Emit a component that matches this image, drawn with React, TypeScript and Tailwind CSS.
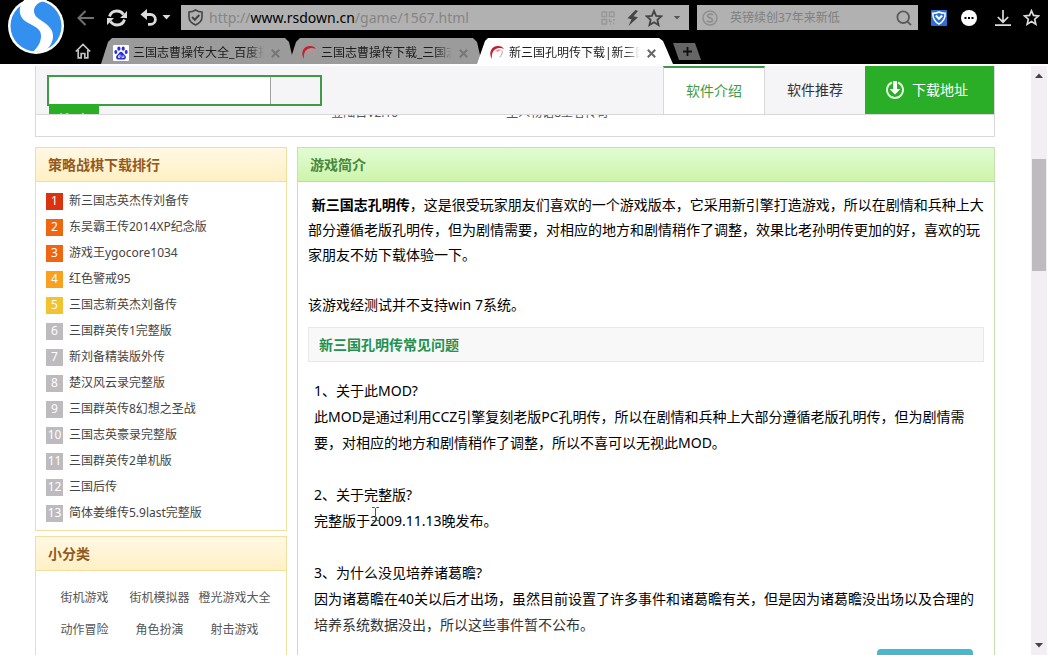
import React from 'react';
import { clsx } from 'clsx';

const tabs = [
  { title: '三国志曹操传大全_百度指', icon: 'baidu', active: false },
  { title: '三国志曹操传下载_三国志', icon: 'swirl', active: false },
  { title: '新三国孔明传下载|新三国', icon: 'swirl', active: true },
];

const ranking = [
  { name: '新三国志英杰传刘备传', color: 'bg-[#dc330f]' },
  { name: '东吴霸王传2014XP纪念版', color: 'bg-[#f0650f]' },
  { name: '游戏王ygocore1034', color: 'bg-[#f0650f]' },
  { name: '红色警戒95', color: 'bg-[#f9a01f]' },
  { name: '三国志新英杰刘备传', color: 'bg-[#f2c22f]' },
  { name: '三国群英传1完整版', color: 'bg-[#bdbbbe]' },
  { name: '新刘备精装版外传', color: 'bg-[#bdbbbe]' },
  { name: '楚汉风云录完整版', color: 'bg-[#bdbbbe]' },
  { name: '三国群英传8幻想之圣战', color: 'bg-[#bdbbbe]' },
  { name: '三国志英豪录完整版', color: 'bg-[#bdbbbe]' },
  { name: '三国群英传2单机版', color: 'bg-[#bdbbbe]' },
  { name: '三国后传', color: 'bg-[#bdbbbe]' },
  { name: '简体姜维传5.9last完整版', color: 'bg-[#bdbbbe]' },
];

const categories = ['街机游戏', '街机模拟器', '橙光游戏大全', '动作冒险', '角色扮演', '射击游戏'];

const STAR = 'M12 2.5l2.8 6.6 7.1.6-5.4 4.7 1.6 7L12 17.7l-6.1 3.7 1.6-7-5.4-4.7 7.1-.6z';

function Star({ className }: { className: string }) {
  return (
    <svg viewBox="0 0 24 24" className={className} fill="none" stroke="currentColor" strokeWidth="2.4">
      <path d={STAR} />
    </svg>
  );
}

function Caret({ className }: { className: string }) {
  return (
    <svg viewBox="0 0 8 5" className={className} fill="currentColor">
      <path d="M0 0h8L4 4.5z" />
    </svg>
  );
}

function Logo() {
  return (
    <svg viewBox="0 0 72 56" className="h-14 w-[72px] shrink-0">
      <circle cx="36" cy="26" r="28" fill="#fff" />
      <circle cx="36" cy="26" r="25.5" fill="#3390ee" />
      <path
        d="M26-2C21 3 19 8 20 13c1 6 6 9 12 12 6 3 9 6 9 11 0 6-3 11-8 16l12-1c5-4 8-9 8-15 0-7-5-11-11-15-5-3-8-6-8-10 0-5 4-9 11-10z"
        fill="#fff"
      />
    </svg>
  );
}

function TabIcon({ kind }: { kind: string }) {
  if (kind === 'baidu') {
    return (
      <svg viewBox="0 0 16 16" className="size-4 shrink-0">
        <rect width="16" height="16" rx="1" fill="#fff" />
        <g fill="#2a32d6">
          <ellipse cx="5.9" cy="3.7" rx="1.6" ry="2.1" />
          <ellipse cx="10.2" cy="3.7" rx="1.6" ry="2.1" />
          <ellipse cx="2.8" cy="7" rx="1.5" ry="1.9" />
          <ellipse cx="13.2" cy="7" rx="1.5" ry="1.9" />
          <path d="M8 6.8c-1.6 0-2 1.6-3.2 2.7-1.3 1.1-2 2-1.6 3.4.4 1.5 1.9 1.7 4.8 1.7s4.4-.2 4.8-1.7c.4-1.4-.3-2.3-1.6-3.4C10 8.400 9.600 6.800 8 6.800z" />
        </g>
        <path d="M7 9.500v3H5.500v-1.700H7M9 10.500v2h1.800v-2" fill="none" stroke="#fff" strokeWidth=".8" />
      </svg>
    );
  }
  return (
    <svg viewBox="0 0 16 16" className="size-4 shrink-0">
      <path d="M3 14C-.5 9 1.500 1.500 8.500 1c3-.2 5.500 1 6.500 3C12 2.600 8.500 2.800 6 4.600 3.500 6.500 2.300 10 3 14z" fill="#c81f2b" />
      <path d="M5.500 6.500C8 4.300 11.500 4 13.500 5c-2 0-3.500.6-4.500 1.700-1-.6-2-.7-3.500-.2z" fill="#e8838a" />
      <path d="M13 5.500c.6 2.500-.2 4.500-2.200 6.500" fill="none" stroke="#d98a8f" strokeWidth="1" />
    </svg>
  );
}

function BrowserBar() {
  return (
    <header className="flex h-16 shrink-0 items-start bg-black">
      <Logo />
      <div className="min-w-0 flex-1">
        <div className="mt-[5px] flex h-[25px] items-center">
          <button aria-label="后退" className="ml-[5px] text-[#707070]">
            <svg viewBox="0 0 17 16" className="h-4 w-[17px]" fill="none" stroke="currentColor" strokeWidth="2">
              <path d="M17 8H2M8.500 1L1.500 8l7 7" />
            </svg>
          </button>
          <button aria-label="刷新" className="ml-3 text-[#dcdcdc]">
            <svg viewBox="0 0 22 20" className="h-5 w-[22px]" fill="none" stroke="currentColor" strokeWidth="2.800">
              <path d="M3.500 8.500C4.500 5 7.500 3 11 3c3 0 5 1.200 6.500 3.500M18.500 11.500C17.500 15 14.500 17 11 17c-3 0-5-1.200-6.500-3.500" />
              <path d="M21 3v7h-7zM1 17v-7h7z" fill="currentColor" stroke="none" />
            </svg>
          </button>
          <button aria-label="撤销" className="ml-3 text-[#dcdcdc]">
            <svg viewBox="0 0 18 18" className="size-[18px]" fill="none" stroke="currentColor" strokeWidth="2.800">
              <path d="M3 5.500h7.500a4.700 4.700 0 010 9.800H8" />
              <path d="M7 0v11L.5 5.500z" fill="currentColor" stroke="none" />
            </svg>
          </button>
          <button aria-label="历史" className="ml-1 text-[#dcdcdc]">
            <Caret className="h-[5px] w-[9px]" />
          </button>

          {/* Address box */}
          <div className="ml-2.5 flex h-full min-w-0 flex-1 items-center bg-[#b1b1b1] pr-2 pl-[7px]">
            <svg viewBox="0 0 15 17" className="h-[17px] w-[15px] shrink-0" fill="none" stroke="#444" strokeWidth="1.600">
              <path d="M7.500 1C5.500 2.400 3.500 3 1 3v5c0 4 3 6.500 6.500 8 3.500-1.500 6.500-4 6.500-8V3c-2.500 0-4.500-.6-6.500-2z" />
              <path d="M4 8l2.800 2.800L11.300 6" strokeWidth="2" />
            </svg>
            <div className="ml-1.5 min-w-0 flex-1 truncate text-sm text-[#858585]">
              http://<span className="text-black">www.rsdown.cn</span>/game/1567.html
            </div>
            <svg viewBox="0 0 14 14" className="size-3.5 shrink-0" fill="none" stroke="#989898" strokeWidth="1.500">
              <path d="M1 1h4.500v4.500H1zM8.500 1H13v4.500H8.500zM1 8.500h4.500V13H1zM8.500 8v2.500H11M13 8v2M9 13h1M12 12.500h1.500" />
            </svg>
            <svg viewBox="0 0 12 16" className="ml-3 h-4 w-3 shrink-0" fill="#444">
              <path d="M8.500 0L.5 8.300l4 1L1.500 16l9.500-8.800-4.500-1L11 1z" />
            </svg>
            <button aria-label="收藏" className="ml-1.5 text-[#444]">
              <Star className="size-[18px]" />
            </button>
            <button aria-label="展开" className="ml-2.5 text-[#555]">
              <Caret className="h-1 w-2" />
            </button>
          </div>

          {/* Search box */}
          <div className="ml-2 flex h-full w-[221px] items-center bg-[#b1b1b1] pr-1.5 pl-[5px]">
            <svg viewBox="0 0 16 16" className="size-4 shrink-0" fill="none" stroke="#8f8f8f">
              <circle cx="8" cy="8" r="7" strokeWidth="1.500" />
              <path d="M11 5C9 3.500 5.500 4 5.500 6S10.500 7.800 10.500 10 7 12.500 4.800 11" strokeWidth="1.800" />
            </svg>
            <input
              aria-label="搜索"
              placeholder="英镑续创37年来新低"
              className="ml-3 min-w-0 flex-1 bg-transparent text-xs outline-none placeholder:text-[#808080]"
            />
            <button aria-label="搜索网页">
              <svg viewBox="0 0 16 16" className="size-4" fill="none" stroke="#5a5a5a" strokeWidth="1.800">
                <circle cx="7.200" cy="7.200" r="5.800" />
                <path d="M11.300 11.300L15 15.200" />
              </svg>
            </button>
          </div>

          <button aria-label="安全" className="ml-[13px]">
            <svg viewBox="0 0 16 16" className="size-4">
              <rect width="16" height="16" rx="1" fill="#2b6fd0" />
              <path d="M8 2C6 3.200 4 3.300 1.800 3.200c0 5 1.700 8.500 6.200 10.800 4.500-2.300 6.200-5.800 6.200-10.800C12 3.300 10 3.200 8 2z" fill="none" stroke="#fff" strokeWidth="1.500" />
              <path d="M4.800 5.500L8 8.800l3.200-3.300" fill="none" stroke="#fff" strokeWidth="2" />
            </svg>
          </button>
          <button aria-label="更多" className="ml-3.5">
            <svg viewBox="0 0 16 16" className="size-4">
              <circle cx="8" cy="8" r="8" fill="#fff" />
              <path d="M3.500 7h2v2h-2zM7 7h2v2H7zM10.500 7h2v2h-2z" fill="#000" />
            </svg>
          </button>
          <button aria-label="下载" className="ml-[18px]">
            <svg viewBox="0 0 16 16" className="size-4" fill="none" stroke="#dcdcdc" strokeWidth="1.700">
              <path d="M8 0v12M2.800 7L8 12.200 13.200 7M0 15.200h16" />
            </svg>
          </button>
          <button aria-label="收藏夹" className="mr-2 ml-3 text-[#dcdcdc]">
            <Star className="size-[17px]" />
          </button>
        </div>

        {/* Tab strip */}
        <div className="mt-2 flex h-[26px]">
          <button aria-label="主页" className="ml-[3px]">
            <svg viewBox="0 0 16 16" className="size-4" fill="none" stroke="#c4c4c4" strokeWidth="1.700">
              <path d="M.8 8.500L8 1.500l7.200 7M3.200 7v7.800h3V10.500h3.600v4.300h3V7" />
            </svg>
          </button>
          <div className="ml-2.5 flex min-w-0">
            {tabs.map((tab) => (
              <div
                key={tab.title}
                className={clsx(
                  'flex w-[196px] items-center pt-1 pr-[17px] pl-3 not-first:-ml-2',
                  tab.active
                    ? 'z-10 bg-white [clip-path:polygon(0_100%,8px_12%,11px_0,182px_0,186px_12%,100%_100%)]'
                    : 'bg-[#9b9b9b] [clip-path:polygon(0_100%,7px_15%,11px_0,184px_0,188px_15%,193px_100%)]',
                )}
              >
                <TabIcon kind={tab.icon} />
                <span className="ml-1 w-[131px] overflow-hidden text-xs whitespace-nowrap text-[#1c1c1c] [mask-image:linear-gradient(to_right,black_88%,transparent)]">
                  {tab.title}
                </span>
                <button aria-label="关闭标签" className={clsx('ml-[7px]', tab.active ? 'text-[#666]' : 'text-[#777]')}>
                  <svg viewBox="0 0 9 9" className="size-[9px]" stroke="currentColor" strokeWidth="2">
                    <path d="M.8.8l7.400 7.400M8.200.8L.8 8.200" />
                  </svg>
                </button>
              </div>
            ))}
          </div>
          <button
            aria-label="新标签"
            className="mt-[5px] flex h-[17px] w-7 items-center justify-center bg-[#666] [clip-path:polygon(0_0,22px_0,100%_100%,6px_100%)]"
          >
            <svg viewBox="0 0 9 9" className="size-[9px]" stroke="#111" strokeWidth="1.800">
              <path d="M4.500 0v9M0 4.500h9" />
            </svg>
          </button>
        </div>
      </div>
    </header>
  );
}

function StickyNav() {
  return (
    <div className="flex h-[49px] items-start overflow-hidden border-x border-b border-[#d9d9d9] bg-[#f5f4f7]">
      <form className="mt-[9px] ml-[11px] h-[31px] w-[275px] border-2 border-[#3f9a45]">
        <input aria-label="站内搜索" className="block h-[27px] w-[222px] border-r border-[#a0a0a0] bg-white px-1 text-sm outline-none" />
        <button type="button" className="h-8 w-[50px] bg-[#2aad27] text-sm text-white">
          搜 索
        </button>
      </form>
      <nav className="ml-auto flex h-12 text-sm">
        <a href="#intro" className="flex w-[102px] items-center justify-center border-x border-t-2 border-x-[#d9d9d9] border-t-[#3f9a45] bg-white text-[#3f9a45]">
          软件介绍
        </a>
        <a href="#recommend" className="flex w-[100px] items-center justify-center text-[#333]">
          软件推荐
        </a>
        <a href="#download" className="flex w-[129px] items-center gap-2 bg-[#2aad27] pl-[21px] text-white">
          <svg viewBox="0 0 18 18" className="size-[18px]" fill="none" stroke="#dff5dc" strokeWidth="2">
            <path d="M6 1.500a8 8 0 106 0" />
            <path d="M7 0h4v8h3.500L9 13.500 3.500 8H7z" fill="#fff" stroke="none" />
          </svg>
          下载地址
        </a>
      </nav>
    </div>
  );
}

function PanelTitle({ children, green }: { children: React.ReactNode; green?: boolean }) {
  return (
    <h2
      className={clsx(
        'flex h-[34px] items-center border-b px-3 text-sm font-bold',
        green
          ? 'border-[#b9dc9c] bg-linear-to-b from-[#e2fbd2] to-[#cdf5ab] text-[#46893f]'
          : 'border-[#f0dfa0] bg-linear-to-b from-[#fff8e4] to-[#fff0c4] text-[#94591c]',
      )}
    >
      {children}
    </h2>
  );
}

function Sidebar() {
  return (
    <aside className="flex w-[252px] shrink-0 flex-col gap-[5px]">
      <section className="border border-[#f0dfa0]">
        <PanelTitle>策略战棋下载排行</PanelTitle>
        <ol className="pt-1.5 pb-1 pl-2.5">
          {ranking.map((item, i) => (
            <li key={item.name} className="flex h-[26px] items-center gap-1.5 text-xs">
              <span className={clsx('flex size-[17px] items-center justify-center text-white', item.color)}>{i + 1}</span>
              <a href="#game" className="text-[#444]">{item.name}</a>
            </li>
          ))}
        </ol>
      </section>
      <section className="border border-[#f0dfa0]">
        <PanelTitle>小分类</PanelTitle>
        <div className="grid grid-cols-3 pt-[11px] pr-3.5 pb-10 pl-[11px] text-xs">
          {categories.map((name) => (
            <a key={name} href="#category" className="flex h-8 items-center justify-center whitespace-nowrap text-[#555]">
              {name}
            </a>
          ))}
        </div>
      </section>
    </aside>
  );
}

function Article() {
  return (
    <main className="flex min-w-0 flex-1 flex-col border border-[#c6e0b0]">
      <PanelTitle green>游戏简介</PanelTitle>
      <div className="px-2.5 pt-2.5 text-sm text-black">
        <p className="leading-[25px]">
          &nbsp;<b>新三国志孔明传</b>，这是很受玩家朋友们喜欢的一个游戏版本，它采用新引擎打造游戏，所以在剧情和兵种上大部分遵循老版孔明传，但为剧情需要，对相应的地方和剧情稍作了调整，效果比老孙明传更加的好，喜欢的玩家朋友不妨下载体验一下。
        </p>
        <p className="mt-[25px] leading-[25px]">该游戏经测试并不支持win 7系统。</p>
        <h3 className="mt-2.5 flex h-[35px] items-center border border-[#e8e8e8] bg-[#f8f8f8] px-2.5 font-bold text-[#22914f]">
          新三国孔明传常见问题
        </h3>
        <div className="mt-4 space-y-[26px] px-1.5 leading-[26px]">
          <p>
            1、关于此MOD?
            <br />
            此MOD是通过利用CCZ引擎复刻老版PC孔明传，所以在剧情和兵种上大部分遵循老版孔明传，但为剧情需要，对相应的地方和剧情稍作了调整，所以不喜可以无视此MOD。
          </p>
          <p>
            2、关于完整版?
            <br />
            完整版于
            <span className="relative">
              2009.11.13
              <svg viewBox="0 0 7 14" className="absolute -top-1 left-0.5 h-3.5 w-[7px]" fill="none" stroke="#555">
                <path d="M0 .5h2.500l1 1 1-1H7M3.500 1v12M0 13.500h2.500l1-1 1 1H7" />
              </svg>
            </span>
            晚发布。
          </p>
          <p>
            3、为什么没见培养诸葛瞻?
            <br />
            因为诸葛瞻在40关以后才出场，虽然目前设置了许多事件和诸葛瞻有关，但是因为诸葛瞻没出场以及合理的
            <span className="text-[#333]">培养系统数据没出，所以这些事件暂不公布。</span>
          </p>
        </div>
        <button aria-label="下一页" className="mt-[11px] mr-[11px] ml-auto block h-8 w-24 rounded-sm bg-[#46b9cf]" />
      </div>
    </main>
  );
}

function Scrollbar() {
  return (
    <div className="flex w-[18px] shrink-0 flex-col items-center px-px pt-0.5">
      <div className="flex w-full flex-1 flex-col items-center bg-[#f1eff2] py-[7px] text-[#444]">
        <Caret className="h-[5px] w-2 rotate-180" />
        <div className="mt-[81px] h-28 w-3.5 bg-[#bdbbbe]" />
        <Caret className="mt-auto h-[5px] w-2" />
      </div>
    </div>
  );
}

export default function App() {
  return (
    <div className="flex h-screen flex-col overflow-hidden bg-white font-['Noto_Sans','Noto_Sans_CJK_SC',sans-serif]">
      <BrowserBar />
      <div className="flex min-h-0 flex-1">
        <div className="min-w-0 flex-1 overflow-hidden pt-0.5">
          <div className="mx-auto max-w-[960px]">
            <StickyNav />
            {/* Tail of the related list, mostly hidden under the nav */}
            <div className="h-[22px] border-x border-b border-[#d9d9d9]">
              <ul className="flex h-1.5 items-end overflow-hidden pl-[286px] text-xs leading-4 text-[#555]">
                <li className="flex w-[175px] gap-1.5">
                  <span>·</span>登陆日V2.10
                </li>
                <li className="flex gap-1.5">
                  <span>·</span>主人物语8王者传奇
                </li>
              </ul>
            </div>
            <div className="mt-2.5 flex gap-2.5">
              <Sidebar />
              <Article />
            </div>
          </div>
        </div>
        <Scrollbar />
      </div>
    </div>
  );
}
